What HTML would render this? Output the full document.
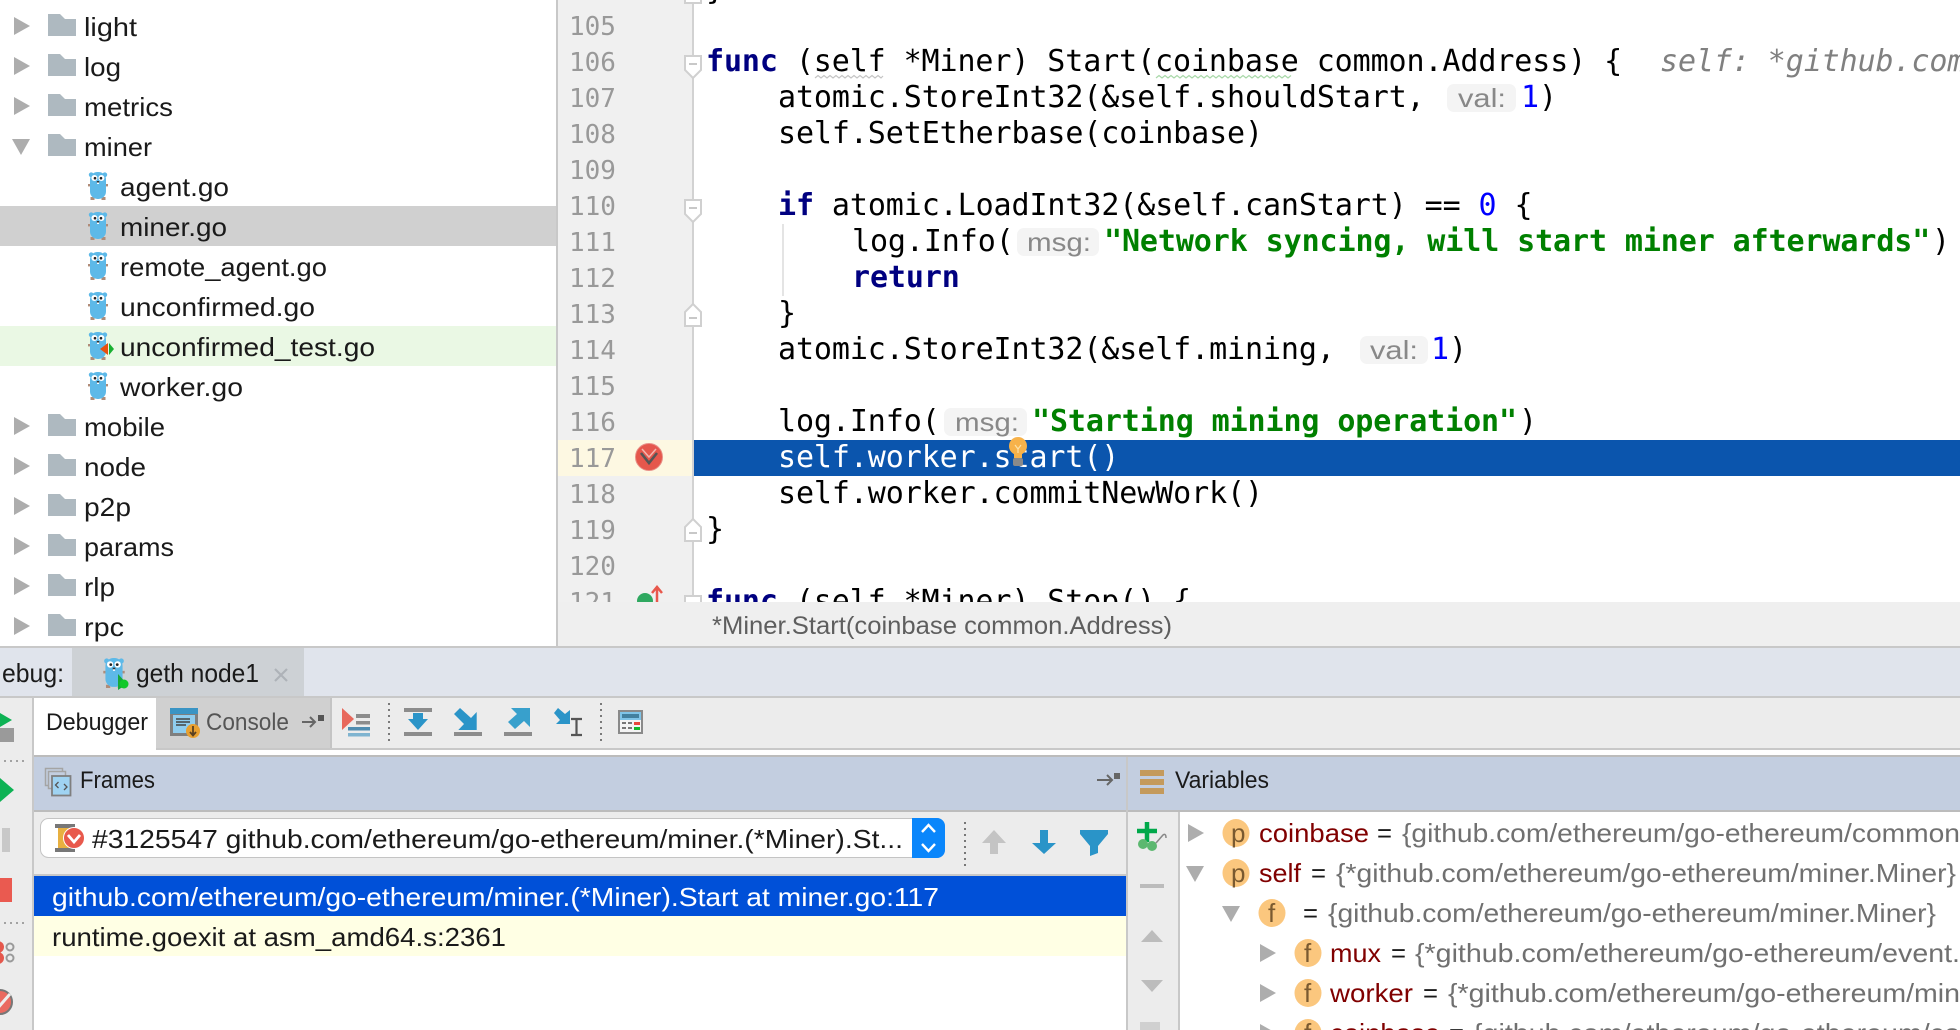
<!DOCTYPE html>
<html><head><meta charset="utf-8"><title>Debug</title>
<style>
html,body{margin:0;padding:0;background:#fff;width:1960px;height:1030px;overflow:hidden}
svg{display:block}
text{white-space:pre}
.u{font-family:"Liberation Sans",sans-serif;font-size:26px;fill:#1a1a1a}
.m{font-family:"DejaVu Sans Mono","Liberation Mono",monospace;font-size:30px;fill:#000;letter-spacing:-0.1px}
.n{font-family:"DejaVu Sans Mono","Liberation Mono",monospace;font-size:26px;fill:#999}
.k{font-weight:bold;fill:#000080}
.g{font-weight:bold;fill:#008000}
.b{fill:#0000ff}
.h{font-family:"Liberation Sans",sans-serif;font-size:26px;fill:#888}
.w{fill:#fff}
.r{fill:#800000}
.v{fill:#707070}
</style></head><body>
<svg width="1960" height="1030" viewBox="0 0 1960 1030" xmlns="http://www.w3.org/2000/svg">
<defs>
<symbol id="gopher" viewBox="0 0 20 28" width="20" height="28" overflow="visible">
<rect x="0" y="12" width="3" height="2.4" fill="#b08c78"/><rect x="17" y="12" width="3" height="2.4" fill="#b08c78"/>
<rect x="2.5" y="25" width="4" height="3" fill="#b08c78"/><rect x="13.5" y="25" width="4" height="3" fill="#b08c78"/>
<circle cx="3.2" cy="2.8" r="2.4" fill="#5db9e8"/><circle cx="16.8" cy="2.8" r="2.4" fill="#5db9e8"/>
<rect x="2" y="0" width="16" height="27" rx="7.5" fill="#5db9e8"/>
<circle cx="6.4" cy="6" r="3" fill="#fff"/><circle cx="13.4" cy="6" r="3" fill="#fff"/>
<circle cx="7" cy="6.2" r="1.3" fill="#222"/><circle cx="13" cy="6.2" r="1.3" fill="#222"/>
<rect x="8.8" y="9" width="2.4" height="1.6" fill="#333"/><rect x="9" y="10.6" width="2" height="1.4" fill="#fff"/>
</symbol>
<symbol id="folder" viewBox="0 0 28 22" width="28" height="22"><path d="M0 0H12L17 5H28V22H0Z" fill="#aeb9c0"/></symbol>
<symbol id="ar" viewBox="0 0 16 18" width="16" height="18"><path d="M0 0L16 9L0 18Z" fill="#adadad"/></symbol>
<symbol id="ad" viewBox="0 0 18 16" width="18" height="16"><path d="M0 0H18L9 16Z" fill="#adadad"/></symbol>
<symbol id="fd" viewBox="0 0 18 24" width="18" height="24"><path d="M1 1H17V15L9 23L1 15Z" fill="#fff" stroke="#d0d0d0" stroke-width="2"/><path d="M5 9H13" stroke="#c8c8c8" stroke-width="2"/></symbol>
<symbol id="fu" viewBox="0 0 18 24" width="18" height="24"><path d="M1 23H17V9L9 1L1 9Z" fill="#fff" stroke="#d0d0d0" stroke-width="2"/><path d="M5 15H13" stroke="#c8c8c8" stroke-width="2"/></symbol>
<symbol id="ic" viewBox="0 0 28 28" width="28" height="28"><ellipse cx="14" cy="14" rx="13.5" ry="14" fill="#fbc77e"/></symbol>
</defs>

<!-- project tree -->
<rect x="0" y="206" width="556" height="40" fill="#d0d0d0"/>
<rect x="0" y="326" width="556" height="40" fill="#eaf8e4"/>
<rect x="556" y="0" width="2" height="648" fill="#c8c8c8"/>
<use href="#ar" x="14" y="17"/><use href="#folder" x="48" y="14"/><text class="u" x="84" y="36" textLength="53" lengthAdjust="spacingAndGlyphs">light</text>
<use href="#ar" x="14" y="57"/><use href="#folder" x="48" y="54"/><text class="u" x="84" y="76" textLength="37" lengthAdjust="spacingAndGlyphs">log</text>
<use href="#ar" x="14" y="97"/><use href="#folder" x="48" y="94"/><text class="u" x="84" y="116" textLength="89" lengthAdjust="spacingAndGlyphs">metrics</text>
<use href="#ad" x="12" y="139"/><use href="#folder" x="48" y="134"/><text class="u" x="84" y="156" textLength="68" lengthAdjust="spacingAndGlyphs">miner</text>
<use href="#gopher" x="88" y="172"/><text class="u" x="120" y="196" textLength="109" lengthAdjust="spacingAndGlyphs">agent.go</text>
<use href="#gopher" x="88" y="212"/><text class="u" x="120" y="236" textLength="107" lengthAdjust="spacingAndGlyphs">miner.go</text>
<use href="#gopher" x="88" y="252"/><text class="u" x="120" y="276" textLength="207" lengthAdjust="spacingAndGlyphs">remote_agent.go</text>
<use href="#gopher" x="88" y="292"/><text class="u" x="120" y="316" textLength="195" lengthAdjust="spacingAndGlyphs">unconfirmed.go</text>
<use href="#gopher" x="88" y="332"/><path d="M108 343V355L100 349Z" fill="#e8500e"/><path d="M109 343V355L114 349Z" fill="#18b030"/><text class="u" x="120" y="356" textLength="255" lengthAdjust="spacingAndGlyphs">unconfirmed_test.go</text>
<use href="#gopher" x="88" y="372"/><text class="u" x="120" y="396" textLength="123" lengthAdjust="spacingAndGlyphs">worker.go</text>
<use href="#ar" x="14" y="417"/><use href="#folder" x="48" y="414"/><text class="u" x="84" y="436" textLength="81" lengthAdjust="spacingAndGlyphs">mobile</text>
<use href="#ar" x="14" y="457"/><use href="#folder" x="48" y="454"/><text class="u" x="84" y="476" textLength="62" lengthAdjust="spacingAndGlyphs">node</text>
<use href="#ar" x="14" y="497"/><use href="#folder" x="48" y="494"/><text class="u" x="84" y="516" textLength="47" lengthAdjust="spacingAndGlyphs">p2p</text>
<use href="#ar" x="14" y="537"/><use href="#folder" x="48" y="534"/><text class="u" x="84" y="556" textLength="90" lengthAdjust="spacingAndGlyphs">params</text>
<use href="#ar" x="14" y="577"/><use href="#folder" x="48" y="574"/><text class="u" x="84" y="596" textLength="31" lengthAdjust="spacingAndGlyphs">rlp</text>
<use href="#ar" x="14" y="617"/><use href="#folder" x="48" y="614"/><text class="u" x="84" y="636" textLength="40" lengthAdjust="spacingAndGlyphs">rpc</text>

<!-- gutter -->
<rect x="558" y="0" width="135" height="602" fill="#f0f0f0"/>
<rect x="558" y="440" width="135" height="36" fill="#fdf8e2"/>
<rect x="692" y="0" width="2" height="602" fill="#d2d2d2"/>
<rect x="694" y="440" width="1266" height="36" fill="#0b55ad"/>
<text class="n" x="569" y="35">105</text><text class="n" x="569" y="71">106</text><text class="n" x="569" y="107">107</text><text class="n" x="569" y="143">108</text><text class="n" x="569" y="179">109</text><text class="n" x="569" y="215">110</text><text class="n" x="569" y="251">111</text><text class="n" x="569" y="287">112</text><text class="n" x="569" y="323">113</text><text class="n" x="569" y="359">114</text><text class="n" x="569" y="395">115</text><text class="n" x="569" y="431">116</text><text class="n" x="569" y="467">117</text><text class="n" x="569" y="503">118</text><text class="n" x="569" y="539">119</text><text class="n" x="569" y="575">120</text><text class="n" x="569" y="611">121</text>
<use href="#fu" x="684" y="-20"/>
<use href="#fd" x="684" y="55"/><use href="#fd" x="684" y="199"/><use href="#fu" x="684" y="303"/><use href="#fu" x="684" y="518"/><use href="#fd" x="684" y="595"/>
<!-- breakpoint -->
<circle cx="649" cy="457" r="13.5" fill="#e5574c" stroke="#e89088" stroke-width="1"/><path d="M641 453L649 463L657 453" fill="none" stroke="#555" stroke-width="2.600"/><path d="M642 449L649 457L656 449" fill="none" stroke="#f2b5ae" stroke-width="1.500"/>
<circle cx="645" cy="601" r="8" fill="#2fa860"/><path d="M657 602V588M652 593L657 587L662 593" stroke="#e8584c" stroke-width="2.5" fill="none"/>

<!-- code -->
<path d="M783 224V296" stroke="#e4e4e4" stroke-width="2"/>
<text class="m" x="706" y="-1">}</text>
<text class="m" x="706" y="71"><tspan class="k">func</tspan> (self *Miner) Start(coinbase common.Address) {</text>
<text class="m" x="1660" y="71" font-style="italic" style="fill:#808080">self: *github.com</text>
<path d="M815 78l3 -2.500 3 2.500 3 -2.500 3 2.500 3 -2.500 3 2.500 3 -2.500 3 2.500 3 -2.500 3 2.500 3 -2.500 3 2.500 3 -2.500 3 2.500 3 -2.500 3 2.500 3 -2.500 3 2.500 3 -2.500 3 2.500 3 -2.500 3 2.500 2 -2" fill="none" stroke="#c4c4c4" stroke-width="1.200"/>
<path d="M1156 78l3 -2.500 3 2.500 3 -2.500 3 2.500 3 -2.500 3 2.500 3 -2.500 3 2.500 3 -2.500 3 2.500 3 -2.500 3 2.500 3 -2.500 3 2.500 3 -2.500 3 2.500 3 -2.500 3 2.500 3 -2.500 3 2.500 3 -2.500 3 2.500 3 -2.500 3 2.500 3 -2.500 3 2.500 3 -2.500 3 2.500 3 -2.500 3 2.500 3 -2.500 3 2.500 3 -2.500 3 2.500 3 -2.500 3 2.500 3 -2.500 3 2.500 3 -2.500 3 2.500 3 -2.500 3 2.500 3 -2.500 3 2.500 3 -2.500" fill="none" stroke="#a8d8a8" stroke-width="1.200"/>
<text class="m" x="778" y="107">atomic.StoreInt32(&amp;self.shouldStart,</text>
<rect x="1447" y="84" width="69" height="28" rx="7" fill="#f4f4f4"/>
<text class="h" x="1458" y="107" textLength="48" lengthAdjust="spacingAndGlyphs">val:</text>
<text class="m" x="1521" y="107"><tspan class="b">1</tspan>)</text>
<text class="m" x="778" y="143">self.SetEtherbase(coinbase)</text>
<text class="m" x="778" y="215"><tspan class="k">if</tspan> atomic.LoadInt32(&amp;self.canStart) == <tspan class="b">0</tspan> {</text>
<text class="m" x="852" y="251">log.Info(</text>
<rect x="1017" y="228" width="82" height="28" rx="7" fill="#f4f4f4"/>
<text class="h" x="1027" y="251" textLength="64" lengthAdjust="spacingAndGlyphs">msg:</text>
<text class="m g" x="1104" y="251">"Network syncing, will start miner afterwards"</text>
<text class="m" x="1932" y="251">)</text>
<text class="m k" x="852" y="287">return</text>
<text class="m" x="778" y="323">}</text>
<text class="m" x="778" y="359">atomic.StoreInt32(&amp;self.mining,</text>
<rect x="1360" y="336" width="68" height="28" rx="7" fill="#f4f4f4"/>
<text class="h" x="1370" y="359" textLength="48" lengthAdjust="spacingAndGlyphs">val:</text>
<text class="m" x="1431" y="359"><tspan class="b">1</tspan>)</text>
<text class="m" x="778" y="431">log.Info(</text>
<rect x="944" y="408" width="83" height="28" rx="7" fill="#f4f4f4"/>
<text class="h" x="955" y="431" textLength="64" lengthAdjust="spacingAndGlyphs">msg:</text>
<text class="m g" x="1032" y="431">"Starting mining operation"</text>
<text class="m" x="1519" y="431">)</text>
<text class="m w" x="778" y="467">self.worker.start()</text>
<!-- bulb -->
<circle cx="1018" cy="446" r="9" fill="#f7b24a"/><rect x="1014" y="452" width="8" height="6" fill="#f7b24a"/><path d="M1015 445l3 4 3-4M1018 449v4" stroke="#fde2a8" stroke-width="1.200" fill="none"/><rect x="1013" y="458" width="10" height="8" rx="2" fill="#8a8a8a"/>
<text class="m" x="778" y="503">self.worker.commitNewWork()</text>
<text class="m" x="706" y="539">}</text>
<text class="m" x="706" y="611"><tspan class="k">func</tspan> (self *Miner) Stop() {</text>

<!-- breadcrumb -->
<rect x="558" y="602" width="1402" height="44" fill="#efefef"/>
<rect x="0" y="646" width="1960" height="2" fill="#c8c8c8"/>
<text class="u" x="712" y="634" textLength="460" lengthAdjust="spacingAndGlyphs" style="font-size:25px;fill:#5e5e5e">*Miner.Start(coinbase common.Address)</text>

<!-- debug tab bar -->
<rect x="0" y="648" width="1960" height="48" fill="#e0e4ec"/>
<rect x="72" y="648" width="232" height="48" fill="#cdd1d5"/>
<rect x="0" y="696" width="1960" height="2" fill="#c8c8c8"/>
<text class="u" x="2" y="682" textLength="62" lengthAdjust="spacingAndGlyphs">ebug:</text>
<use href="#gopher" x="103" y="658" width="22" height="30"/><path d="M118 674L127 684L118 690Z" fill="#17a83a"/><circle cx="124" cy="684" r="4.500" fill="#12c82a"/>
<text class="u" x="136" y="682" textLength="123" lengthAdjust="spacingAndGlyphs">geth node1</text>
<path d="M275 669L287 681M287 669L275 681" stroke="#aeb2b8" stroke-width="2.200"/>

<!-- left strip -->
<rect x="0" y="698" width="32" height="332" fill="#ececec"/>
<rect x="32" y="698" width="2" height="332" fill="#c8c8c8"/>
<path d="M0 713L12 720L0 727Z" fill="#0db254"/>
<rect x="0" y="728" width="14" height="14" fill="#9a9a9a"/>
<path d="M4 761H24" stroke="#8a8a8a" stroke-width="1.600" stroke-dasharray="2 4"/>
<path d="M0 778L14 790L0 802Z" fill="#0db254"/>
<rect x="2" y="828" width="8" height="24" fill="#c8c8c8"/>
<rect x="0" y="878" width="12" height="24" fill="#ea5a50"/>
<path d="M4 923H24" stroke="#8a8a8a" stroke-width="1.600" stroke-dasharray="2 4"/>
<circle cx="-2" cy="947" r="6" fill="#e5574c"/><circle cx="-2" cy="958" r="6" fill="#e5574c"/>
<circle cx="10" cy="947" r="3.500" fill="none" stroke="#9a9a9a" stroke-width="2"/><circle cx="10" cy="958" r="3.500" fill="none" stroke="#9a9a9a" stroke-width="2"/>
<circle cx="0" cy="1002" r="12" fill="#ea6a60" stroke="#777" stroke-width="2"/><path d="M-4 1010L10 994" stroke="#eee" stroke-width="3"/>

<!-- toolbar -->
<rect x="34" y="698" width="1926" height="50" fill="#ececec"/>
<rect x="34" y="748" width="1926" height="2" fill="#c8c8c8"/>
<rect x="34" y="750" width="1926" height="6" fill="#fff"/>
<rect x="34" y="698" width="122" height="58" fill="#fff"/>
<rect x="156" y="698" width="174" height="50" fill="#d0d0d0"/>
<rect x="330" y="698" width="2" height="50" fill="#c4c4c4"/>
<text class="u" x="46" y="730" textLength="102" lengthAdjust="spacingAndGlyphs" style="font-size:24px">Debugger</text>
<!-- console icon -->
<rect x="170" y="708" width="28" height="28" fill="#7f7f7f"/><rect x="170" y="708" width="28" height="6" fill="#3a94c4"/><rect x="173" y="715" width="22" height="18" fill="#8fcdef"/>
<path d="M176 719H190M176 722H190M176 725H186" stroke="#444" stroke-width="1.500"/>
<circle cx="193" cy="731" r="7" fill="#e8a030"/><path d="M193 726V735M190 732L193 735.500L196 732" stroke="#5a4020" stroke-width="1.800" fill="none"/>
<text class="u" x="206" y="730" textLength="83" lengthAdjust="spacingAndGlyphs" style="font-size:24px;fill:#555">Console</text>
<path d="M302 722H314M310 717L315 722L310 727" stroke="#666" stroke-width="2" fill="none"/><rect x="318" y="715" width="6" height="6" fill="#555"/>
<!-- show exec point -->
<path d="M342 708L354 719L342 730Z" fill="#e8685c"/>
<rect x="356" y="714" width="14" height="4" fill="#8c8c8c"/><rect x="356" y="721" width="14" height="3.500" fill="#8c8c8c"/>
<rect x="348" y="727" width="22" height="3.500" fill="#4f8cb0"/><rect x="348" y="733" width="22" height="3.500" fill="#7fb4d0"/>
<path d="M389 703V741" stroke="#7a7a7a" stroke-width="2" stroke-dasharray="2 4"/>
<!-- step over -->
<rect x="404" y="708" width="28" height="4" fill="#8c8c8c"/><rect x="404" y="732" width="28" height="4" fill="#8c8c8c"/>
<path d="M413 713H423V719H428L418 730L408 719H413Z" fill="#2a94c8"/>
<!-- step into -->
<path d="M460 708L471 718L476.700 712V730H458.300L464 724L454 714Z" fill="#2a94c8"/><rect x="454" y="732" width="28" height="4" fill="#8c8c8c"/>
<!-- step out -->
<path d="M530 708V727L524 721L515 729L508 722L517 714L511 708Z" fill="#38a0cc"/><rect x="504" y="732" width="28" height="4" fill="#8c8c8c"/>
<!-- run to cursor -->
<path d="M558 708L565 714L570 710V724H556L560 720L554 713Z" fill="#2a94c8"/>
<path d="M571 719H582M571 735H582M576.500 719V735" stroke="#555" stroke-width="2.200" fill="none"/>
<path d="M601 703V741" stroke="#7a7a7a" stroke-width="2" stroke-dasharray="2 4"/>
<!-- evaluate -->
<rect x="618" y="710" width="25" height="24" fill="#8a8a8a"/><rect x="620" y="712" width="21" height="20" fill="#f4f4f4"/><rect x="620" y="712" width="21" height="8" fill="#7fc4e8"/><rect x="622" y="714" width="17" height="4" fill="#42809f"/>
<path d="M622 723h4M628 723h4M622 728h4M628 728h4" stroke="#777" stroke-width="2"/><rect x="634" y="722" width="6" height="3" fill="#e8483c"/><rect x="634" y="727" width="6" height="3" fill="#12b82a"/>

<!-- headers -->
<rect x="34" y="755" width="1926" height="2" fill="#bcbcbc"/>
<rect x="34" y="757" width="1926" height="53" fill="#c3cee0"/>
<rect x="34" y="810" width="1926" height="2" fill="#bcbcbc"/>
<rect x="1126" y="757" width="2" height="273" fill="#c8c8c8"/>
<!-- frames icon -->
<rect x="45.500" y="768.500" width="17" height="17" fill="none" stroke="#a4a4a4" stroke-width="1.500"/>
<rect x="48.500" y="771.500" width="17" height="17" fill="#c3cee0" stroke="#a4a4a4" stroke-width="1.500"/>
<rect x="52" y="776" width="18.500" height="19.500" fill="#9fd3f2" stroke="#7f7f7f" stroke-width="1.800"/>
<path d="M58.500 782L55.500 785L58.500 788M64 784L67 787L64 790" fill="none" stroke="#555" stroke-width="1.300"/>
<text class="u" x="80" y="788" textLength="75" lengthAdjust="spacingAndGlyphs" style="font-size:24px">Frames</text>
<path d="M1097 780H1111M1107 775L1112 780L1107 785" stroke="#666" stroke-width="2" fill="none"/><rect x="1114" y="773" width="6" height="6" fill="#666"/>
<rect x="1140" y="770" width="24" height="6" fill="#c49a5c"/><rect x="1140" y="779" width="24" height="6" fill="#c49a5c"/><rect x="1140" y="788" width="24" height="6" fill="#c49a5c"/>
<text class="u" x="1175" y="788" textLength="94" lengthAdjust="spacingAndGlyphs" style="font-size:24px">Variables</text>

<!-- frames panel -->
<rect x="34" y="812" width="1092" height="62" fill="#ececec"/>
<rect x="34" y="874" width="1092" height="2" fill="#c8c8c8"/>
<rect x="40.500" y="818.500" width="904" height="39" rx="8" fill="#fff" stroke="#c4c4c4"/>
<path d="M912 818H937a8 8 0 0 1 8 8V850a8 8 0 0 1 -8 8H912Z" fill="#0a86fb"/>
<path d="M922 832L928.500 825L935 832M922 844L928.500 851L935 844" fill="none" stroke="#fff" stroke-width="2.400"/>
<rect x="55" y="824" width="20" height="4" fill="#777"/><rect x="55" y="848" width="20" height="4" fill="#777"/><rect x="58" y="828" width="14" height="20" fill="#e8b040"/>
<circle cx="74" cy="838" r="10.500" fill="#e8594c" stroke="#fff" stroke-width="1"/><path d="M68 835L74 842L80 835" fill="none" stroke="#fff" stroke-width="2.800"/>
<text class="u" x="92" y="848" textLength="811" lengthAdjust="spacingAndGlyphs">#3125547 github.com/ethereum/go-ethereum/miner.(*Miner).St...</text>
<path d="M965 822V866" stroke="#777" stroke-width="2" stroke-dasharray="2 4"/>
<path d="M994 830L1006 843H998V854H990V843H982Z" fill="#c4c4c4"/>
<path d="M1040 830H1048V843H1056L1044 854L1032 843H1040Z" fill="#2a94c8"/>
<path d="M1080 830H1108V834L1098 846V853L1090 856V846L1080 834Z" fill="#2a94c8"/>
<rect x="34" y="876" width="1092" height="40" fill="#0050d8"/>
<rect x="34" y="916" width="1092" height="40" fill="#ffffe4"/>
<text class="u w" x="52" y="906" textLength="887" lengthAdjust="spacingAndGlyphs">github.com/ethereum/go-ethereum/miner.(*Miner).Start at miner.go:117</text>
<text class="u" x="52" y="946" textLength="454" lengthAdjust="spacingAndGlyphs">runtime.goexit at asm_amd64.s:2361</text>

<!-- watches strip -->
<rect x="1128" y="812" width="50" height="218" fill="#ececec"/>
<rect x="1178" y="812" width="2" height="218" fill="#c8c8c8"/>
<path d="M1147 822V842M1137 831H1157" stroke="#00a84a" stroke-width="4.500"/>
<circle cx="1143" cy="844" r="5" fill="#5cb870"/><circle cx="1152" cy="846" r="5" fill="#5cb870"/><path d="M1156 843L1163 835Q1166 833 1166 838" fill="none" stroke="#888" stroke-width="1.500"/>
<rect x="1140" y="884" width="24" height="4" fill="#bcbcbc"/>
<path d="M1152 930L1163 942H1141Z" fill="#bcbcbc"/>
<path d="M1141 980H1163L1152 992Z" fill="#bcbcbc"/>
<path d="M1140 1022H1160V1030H1140Z" fill="#d0d0d0"/>

<!-- variables -->
<use href="#ar" x="1188" y="824"/><use href="#ic" x="1222" y="819"/><text class="u" x="1231" y="842" style="fill:#7a5a30">p</text>
<text class="u r" x="1259" y="842" textLength="110" lengthAdjust="spacingAndGlyphs">coinbase</text><text class="u" x="1377" y="842" textLength="15" lengthAdjust="spacingAndGlyphs">=</text><text class="u v" x="1402" y="842" textLength="558" lengthAdjust="spacingAndGlyphs">{github.com/ethereum/go-ethereum/common</text>
<use href="#ad" x="1186" y="866"/><use href="#ic" x="1222" y="859"/><text class="u" x="1231" y="882" style="fill:#7a5a30">p</text>
<text class="u r" x="1259" y="882" textLength="42" lengthAdjust="spacingAndGlyphs">self</text><text class="u" x="1311" y="882" textLength="15" lengthAdjust="spacingAndGlyphs">=</text><text class="u v" x="1336" y="882" textLength="620" lengthAdjust="spacingAndGlyphs">{*github.com/ethereum/go-ethereum/miner.Miner}</text>
<use href="#ad" x="1222" y="906"/><use href="#ic" x="1258" y="899"/><text class="u" x="1268" y="922" style="fill:#7a5a30">f</text>
<text class="u" x="1303" y="922" textLength="15" lengthAdjust="spacingAndGlyphs">=</text><text class="u v" x="1328" y="922" textLength="608" lengthAdjust="spacingAndGlyphs">{github.com/ethereum/go-ethereum/miner.Miner}</text>
<use href="#ar" x="1260" y="944"/><use href="#ic" x="1294" y="939"/><text class="u" x="1304" y="962" style="fill:#7a5a30">f</text>
<text class="u r" x="1330" y="962" textLength="51" lengthAdjust="spacingAndGlyphs">mux</text><text class="u" x="1391" y="962" textLength="15" lengthAdjust="spacingAndGlyphs">=</text><text class="u v" x="1415" y="962" textLength="545" lengthAdjust="spacingAndGlyphs">{*github.com/ethereum/go-ethereum/event.</text>
<use href="#ar" x="1260" y="984"/><use href="#ic" x="1294" y="979"/><text class="u" x="1304" y="1002" style="fill:#7a5a30">f</text>
<text class="u r" x="1330" y="1002" textLength="83" lengthAdjust="spacingAndGlyphs">worker</text><text class="u" x="1423" y="1002" textLength="15" lengthAdjust="spacingAndGlyphs">=</text><text class="u v" x="1448" y="1002" textLength="512" lengthAdjust="spacingAndGlyphs">{*github.com/ethereum/go-ethereum/min</text>
<use href="#ar" x="1260" y="1024"/><use href="#ic" x="1294" y="1019"/><text class="u" x="1304" y="1042" style="fill:#7a5a30">f</text>
<text class="u r" x="1330" y="1042" textLength="110" lengthAdjust="spacingAndGlyphs">coinbase</text><text class="u" x="1449" y="1042" textLength="15" lengthAdjust="spacingAndGlyphs">=</text><text class="u v" x="1473" y="1042" textLength="487" lengthAdjust="spacingAndGlyphs">{github.com/ethereum/go-ethereum/co</text>
</svg>
</body></html>
